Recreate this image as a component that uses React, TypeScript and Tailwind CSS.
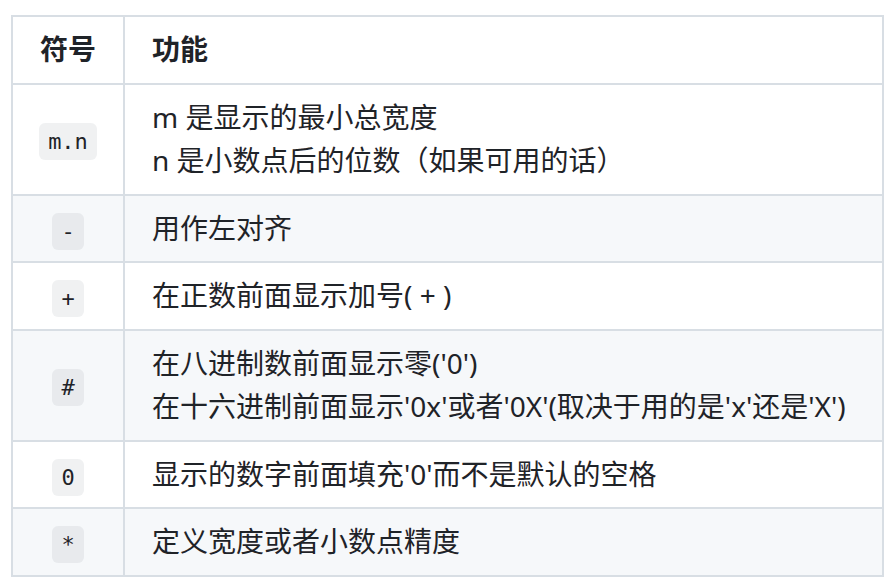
import type { ReactNode } from 'react';

const rows: { sym: string; lines: ReactNode[] }[] = [
  { sym: 'm.n', lines: ['m 是显示的最小总宽度', 'n 是小数点后的位数（如果可用的话）'] },
  { sym: '-', lines: ['用作左对齐'] },
  { sym: '+', lines: ['在正数前面显示加号( + )'] },
  {
    sym: '#',
    lines: ["在八进制数前面显示零('0')", "在十六进制前面显示'0x'或者'0X'(取决于用的是'x'还是'X')"],
  },
  { sym: '0', lines: ["显示的数字前面填充'0'而不是默认的空格"] },
  { sym: '*', lines: ['定义宽度或者小数点精度'] },
];

function Code({ children }: { children: string }) {
  return (
    <code
      className="inline-block h-[37px] rounded-[6px] bg-[#818b981f] px-[9px] text-[22px] leading-[37px] text-[#1f2328]"
      style={{ fontFamily: '"DejaVu Sans Mono", "Liberation Mono", monospace' }}
    >
      {children}
    </code>
  );
}

export default function App() {
  return (
    <div
      className="min-h-[588px] w-[896px] bg-white pl-[11px] pt-[15px] text-[28px] leading-[43.5px] text-[#1f2328]"
      style={{ fontFamily: '"Noto Sans", "Noto Sans CJK SC", sans-serif' }}
    >
      <table className="w-[873px] border-collapse border-2 border-[#d8dee4]">
        <thead>
          <tr className="bg-white">
            <th className="w-[112px] border-2 border-[#d8dee4] px-[10px] py-[11px] text-center font-bold">符号</th>
            <th className="border-2 border-[#d8dee4] px-[27px] py-[11px] text-left font-bold">功能</th>
          </tr>
        </thead>
        <tbody>
          {rows.map((r, i) => (
            <tr key={r.sym} className={i % 2 === 1 ? 'bg-[#f6f8fa]' : 'bg-white'}>
              <td className="border-2 border-[#d8dee4] px-[10px] py-[11px] text-center align-middle">
                <Code>{r.sym}</Code>
              </td>
              <td className="border-2 border-[#d8dee4] px-[27px] py-[11px] align-middle">
                {r.lines.map((l, j) => (
                  <div key={j} className="whitespace-nowrap">
                    {l}
                  </div>
                ))}
              </td>
            </tr>
          ))}
        </tbody>
      </table>
    </div>
  );
}
